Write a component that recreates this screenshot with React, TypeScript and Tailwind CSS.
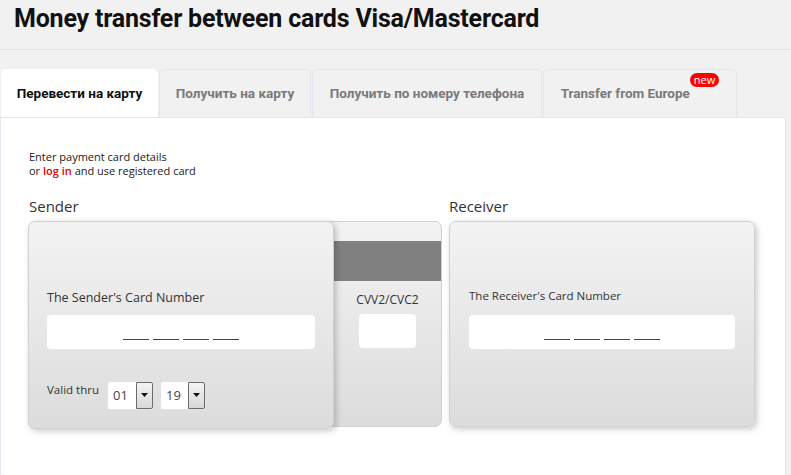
import React from 'react';

const tabs = [
  { label: 'Перевести на карту', w: 'w-[157px]', active: true },
  { label: 'Получить на карту', w: 'w-[152px]' },
  { label: 'Получить по номеру телефона', w: 'w-[230px]' },
  { label: 'Transfer from Europe', w: 'w-[194px]', badge: true },
];

const Blanks = () => (
  <div className="flex gap-[4px]">
    {[0, 1, 2, 3].map((i) => (
      <span key={i} className="block w-[26px] h-px bg-[#444]" />
    ))}
  </div>
);

const CardInput = ({ w }: { w: string }) => (
  <div className={`${w} h-[34px] bg-white rounded-[4px] flex items-end justify-center pb-[9px]`}>
    <Blanks />
  </div>
);

const Select = ({ value, w }: { value: string; w: string }) => (
  <div className={`${w} h-[29px] bg-white rounded-[3px] border border-[#e2e2e2] flex items-stretch`}>
    <span className="flex-1 flex items-center pl-[5px] text-[13px] text-[#444]">{value}</span>
    <span className="w-[17px] bg-gradient-to-b from-[#f4f4f4] to-[#d8d8d8] border border-[#6b6b6b] rounded-r-[2px] flex items-center justify-center">
      <svg width="8" height="5" viewBox="0 0 8 5">
        <path d="M0 0h7L3.5 4z" fill="#111" />
      </svg>
    </span>
  </div>
);

export default function App() {
  return (
    <div className="w-[791px] h-[475px] overflow-hidden bg-[#f1f1f1] font-['Open_Sans',sans-serif] text-[#333]">
      {/* Header */}
      <div className="h-[50px] border-b border-[#e2e2ea] pl-[14px] pt-[1px]">
        <h1 className="font-['Roboto',sans-serif] font-bold text-[25px] leading-[36px] tracking-[-0.2px] text-[#111]">
          Money transfer between cards Visa/Mastercard
        </h1>
      </div>

      {/* Tabs */}
      <div className="flex items-end gap-[1px] pl-[1px] mt-[19px] h-[48px]">
        {tabs.map((t) => (
          <div
            key={t.label}
            className={`${t.w} h-[48px] rounded-t-[5px] flex items-center justify-center font-['Roboto',sans-serif] font-bold text-[13.5px] ${
              t.active
                ? 'bg-white text-[#111]'
                : 'bg-[#f1f1f1] border border-b-0 border-[#e4e4ec] text-[#7a7a7a]'
            }`}
          >
            <span className="flex items-start">
              <span>{t.label}</span>
              {t.badge && (
                <span className="-mt-[10px] h-[14px] px-[4px] rounded-full bg-[#f00] text-white font-['Open_Sans',sans-serif] font-normal text-[11px] leading-[14px]">
                  new
                </span>
              )}
            </span>
          </div>
        ))}
      </div>

      {/* Panel */}
      <div className="w-[786px] h-[400px] bg-white border-l border-r border-t border-[#e3e8f0] pl-[27px] pt-[32px]">
        <div className="text-[11px] leading-[14px] text-[#222] pl-[1px]">
          <div>Enter payment card details</div>
          <div>
            or <span className="text-[#e00000] font-semibold">log in</span> and use registered card
          </div>
        </div>

        <div className="flex gap-[7px] mt-[18px]">
          {/* Sender */}
          <div>
            <h3 className="text-[15px] leading-[20px] pl-[1px] text-[#333]">Sender</h3>
            <div className="flex mt-[5px]">
              <div className="relative z-10 w-[306px] h-[208px] rounded-[7px] border border-[#d0d0d0] bg-gradient-to-b from-[#f3f3f3] to-[#dcdcdc] shadow-[2px_2px_6px_rgba(0,0,0,0.22)] pl-[18px] pt-[68px]">
                <div className="text-[12.5px] leading-[16px] text-[#333]">The Sender's Card Number</div>
                <div className="mt-[9px]">
                  <CardInput w="w-[268px]" />
                </div>
                <div className="flex items-start mt-[32px]">
                  <span className="text-[11.5px] leading-[16px] mt-[1px] w-[60px] text-[#333]">Valid thru</span>
                  <Select value="01" w="w-[47px]" />
                  <div className="ml-[6px]">
                    <Select value="19" w="w-[46px]" />
                  </div>
                </div>
              </div>
              <div className="-ml-[12px] w-[120px] h-[206px] rounded-[7px] border border-[#d0d0d0] bg-gradient-to-b from-[#f3f3f3] to-[#dcdcdc] pt-[19px] overflow-hidden">
                <div className="h-[40px] bg-[#808080]" />
                <div className="pl-[11px] flex flex-col items-center">
                  <span className="text-[12px] leading-[16px] mt-[11px] text-[#333]">CVV2/CVC2</span>
                  <div className="w-[57px] h-[34px] bg-white rounded-[4px] mt-[6px]" />
                </div>
              </div>
            </div>
          </div>

          {/* Receiver */}
          <div>
            <h3 className="text-[15px] leading-[20px] text-[#333]">Receiver</h3>
            <div className="mt-[5px] w-[306px] h-[206px] rounded-[7px] border border-[#d0d0d0] bg-gradient-to-b from-[#f3f3f3] to-[#dcdcdc] shadow-[2px_2px_6px_rgba(0,0,0,0.22)] pl-[19px] pt-[66px]">
              <div className="text-[11.5px] leading-[16px] text-[#333]">The Receiver's Card Number</div>
              <div className="mt-[11px]">
                <CardInput w="w-[266px]" />
              </div>
            </div>
          </div>
        </div>
      </div>
    </div>
  );
}
